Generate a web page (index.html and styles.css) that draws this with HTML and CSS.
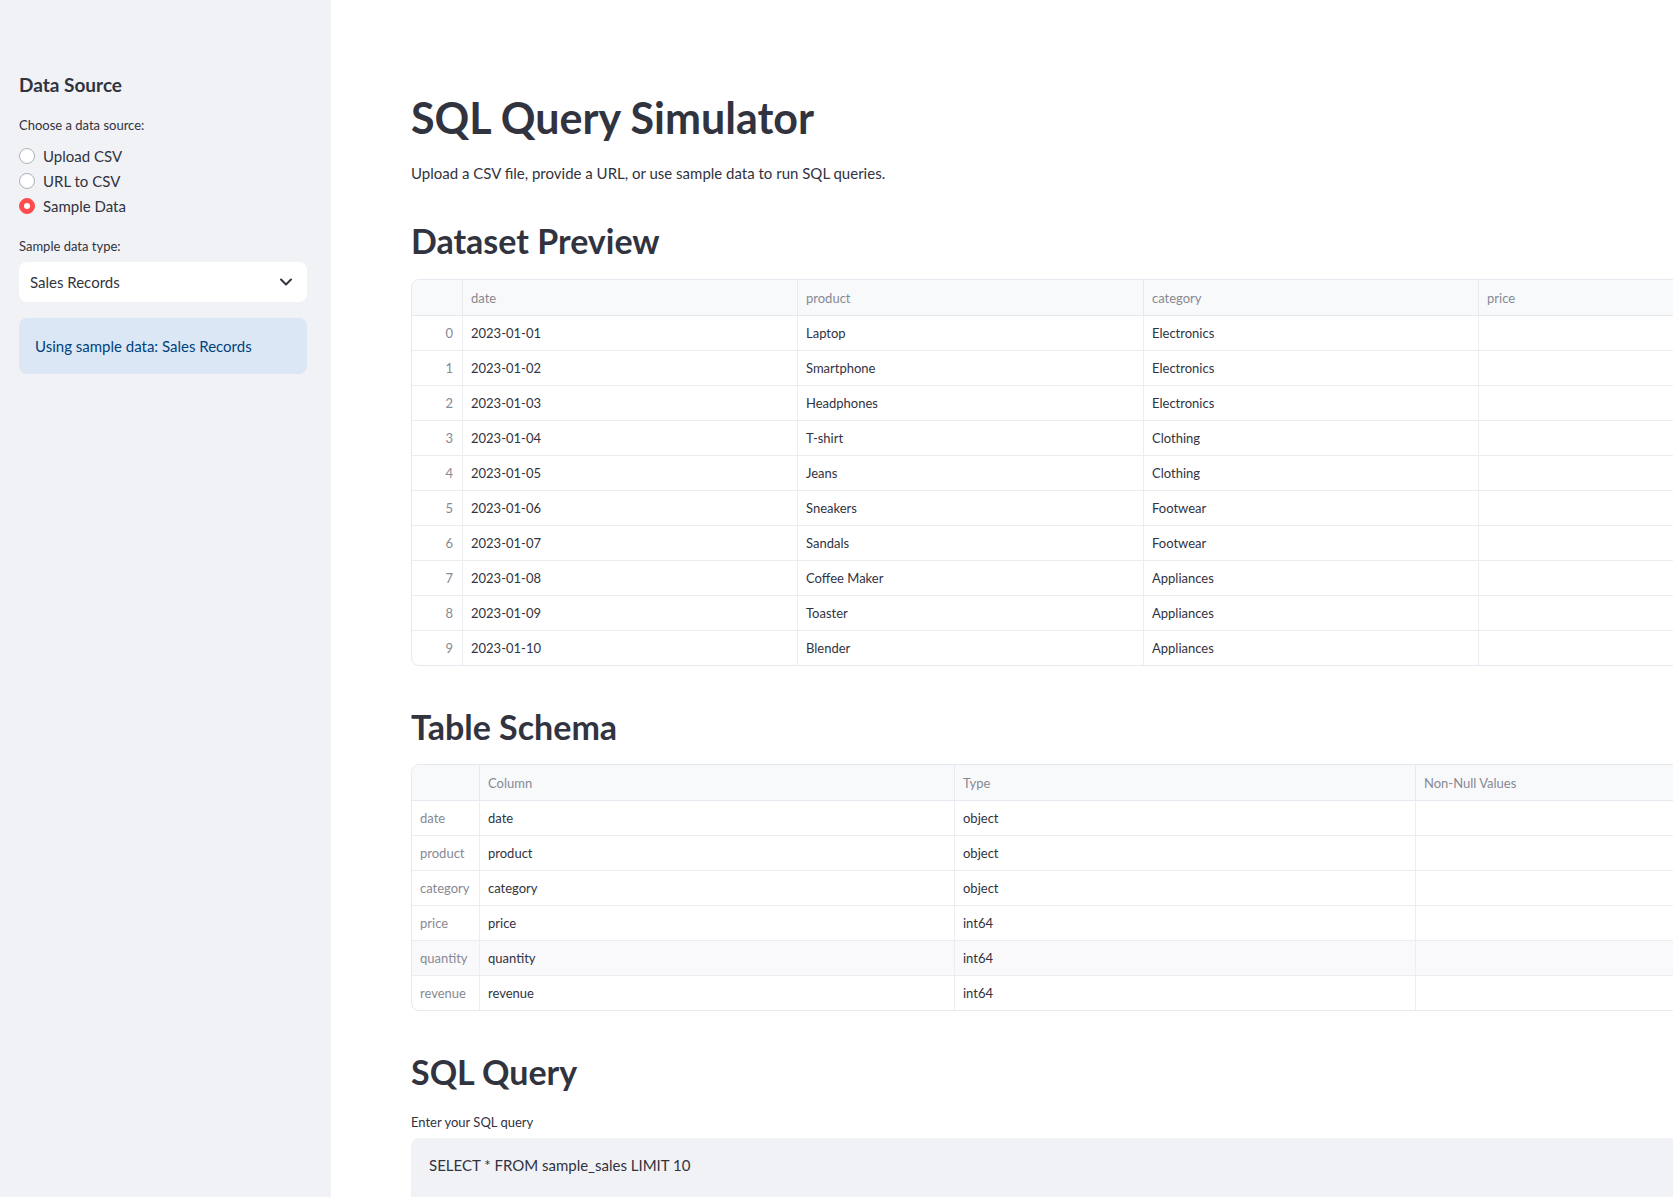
FILE: index.html
```html
<!DOCTYPE html>
<html lang="en">
<head>
<meta charset="utf-8">
<title>SQL Query Simulator</title>
<link rel="stylesheet" href="styles.css">
</head>
<body>
<div class="app">
  <aside class="sidebar">
    <h3 class="sb-title">Data Source</h3>
    <div class="sb-label">Choose a data source:</div>
    <div class="radios">
      <div class="radio"><span class="dot"></span><span>Upload CSV</span></div>
      <div class="radio"><span class="dot"></span><span>URL to CSV</span></div>
      <div class="radio"><span class="dot on"></span><span>Sample Data</span></div>
    </div>
    <div class="sb-label sb-label2">Sample data type:</div>
    <div class="select">
      <span>Sales Records</span>
      <svg class="chev" width="20" height="20" viewBox="0 0 24 24" fill="none" stroke="#31333f" stroke-width="2.4" stroke-linecap="round" stroke-linejoin="round"><path d="M6 9l6 6 6-6"/></svg>
    </div>
    <div class="info">Using sample data: Sales Records</div>
  </aside>
  <main class="main">
    <div class="content">
      <h1 class="title">SQL Query Simulator</h1>
      <p class="lead">Upload a CSV file, provide a URL, or use sample data to run SQL queries.</p>

      <h2 class="h2 h2-first">Dataset Preview</h2>
      <div class="grid grid-first">
        <table class="preview">
          <colgroup>
            <col class="c-idx"><col class="c-date"><col class="c-prod"><col class="c-cat"><col class="c-price"><col class="c-rest">
          </colgroup>
          <thead>
            <tr><th></th><th>date</th><th>product</th><th>category</th><th>price</th><th>quantity</th></tr>
          </thead>
          <tbody>
            <tr><td class="idx">0</td><td>2023-01-01</td><td>Laptop</td><td>Electronics</td><td></td><td></td></tr>
            <tr><td class="idx">1</td><td>2023-01-02</td><td>Smartphone</td><td>Electronics</td><td></td><td></td></tr>
            <tr><td class="idx">2</td><td>2023-01-03</td><td>Headphones</td><td>Electronics</td><td></td><td></td></tr>
            <tr><td class="idx">3</td><td>2023-01-04</td><td>T-shirt</td><td>Clothing</td><td></td><td></td></tr>
            <tr><td class="idx">4</td><td>2023-01-05</td><td>Jeans</td><td>Clothing</td><td></td><td></td></tr>
            <tr><td class="idx">5</td><td>2023-01-06</td><td>Sneakers</td><td>Footwear</td><td></td><td></td></tr>
            <tr><td class="idx">6</td><td>2023-01-07</td><td>Sandals</td><td>Footwear</td><td></td><td></td></tr>
            <tr><td class="idx">7</td><td>2023-01-08</td><td>Coffee Maker</td><td>Appliances</td><td></td><td></td></tr>
            <tr><td class="idx">8</td><td>2023-01-09</td><td>Toaster</td><td>Appliances</td><td></td><td></td></tr>
            <tr><td class="idx">9</td><td>2023-01-10</td><td>Blender</td><td>Appliances</td><td></td><td></td></tr>
          </tbody>
        </table>
      </div>

      <h2 class="h2 h2-schema">Table Schema</h2>
      <div class="grid grid-schema">
        <table class="schema">
          <colgroup>
            <col class="s-idx"><col class="s-col"><col class="s-type"><col class="s-nn">
          </colgroup>
          <thead>
            <tr><th></th><th>Column</th><th>Type</th><th>Non-Null Values</th></tr>
          </thead>
          <tbody>
            <tr><td class="idx left">date</td><td>date</td><td>object</td><td></td></tr>
            <tr><td class="idx left">product</td><td>product</td><td>object</td><td></td></tr>
            <tr><td class="idx left">category</td><td>category</td><td>object</td><td></td></tr>
            <tr><td class="idx left">price</td><td>price</td><td>int64</td><td></td></tr>
            <tr class="hover"><td class="idx left">quantity</td><td>quantity</td><td>int64</td><td></td></tr>
            <tr><td class="idx left">revenue</td><td>revenue</td><td>int64</td><td></td></tr>
          </tbody>
        </table>
      </div>

      <h2 class="h2 h2-query">SQL Query</h2>
      <div class="q-label">Enter your SQL query</div>
      <div class="textarea">SELECT * FROM sample_sales LIMIT 10</div>
    </div>
  </main>
</div>
</body>
</html>
```

FILE: styles.css
```css
* { box-sizing: border-box; }
html, body { margin: 0; padding: 0; }
body {
  font-family: "Source Sans Pro", Lato, "Noto Sans", sans-serif;
  color: #31333f;
  background: #ffffff;
  overflow: hidden;
}
.app {
  display: flex;
  width: 1673px;
  height: 1197px;
  overflow: hidden;
}

/* Sidebar */
.sidebar {
  flex: 0 0 331px;
  width: 331px;
  background: #f0f2f6;
  padding: 71px 24px 0 19px;
}
.sb-title {
  margin: 0;
  font-size: 19px;
  line-height: 28px;
  font-weight: 700;
  color: #31333f;
}
.sb-label {
  margin-top: 16px;
  font-size: 13px;
  line-height: 20px;
  color: #31333f;
}
.radios {
  margin-top: 8px;
  display: flex;
  flex-direction: column;
}
.radio {
  height: 25px;
  display: flex;
  align-items: center;
  gap: 8px;
  font-size: 15px;
  line-height: 24px;
}
.dot {
  width: 16px;
  height: 16px;
  border-radius: 50%;
  background: #ffffff;
  border: 1px solid #aeb1b8;
  flex: 0 0 16px;
  display: flex;
  align-items: center;
  justify-content: center;
}
.dot.on {
  background: #ff4b4b;
  border-color: #ff4b4b;
}
.dot.on::after {
  content: "";
  width: 6px;
  height: 6px;
  border-radius: 50%;
  background: #ffffff;
}
.sb-label2 { margin-top: 18px; }
.select {
  margin-top: 6px;
  height: 40px;
  background: #ffffff;
  border-radius: 8px;
  display: flex;
  align-items: center;
  justify-content: space-between;
  padding: 0 11px 0 11px;
  font-size: 15px;
}
.chev { display: block; }
.info {
  margin-top: 16px;
  height: 56px;
  border-radius: 8px;
  background: #dbe7f4;
  color: #004280;
  font-size: 15px;
  line-height: 24px;
  padding: 16px 16px;
}

/* Main */
.main {
  flex: 1 1 auto;
  min-width: 0;
  overflow: hidden;
}
.content {
  width: 1500px;
  padding: 92px 0 0 80px;
}
.title {
  margin: 0;
  font-size: 43px;
  line-height: 52px;
  font-weight: 700;
  color: #31333f;
}
.lead {
  margin: 17px 0 0;
  font-size: 15px;
  line-height: 24px;
}
.h2 {
  margin: 0;
  font-size: 34px;
  line-height: 44px;
  font-weight: 700;
  color: #31333f;
}
.h2-first { margin-top: 34px; }
.h2-schema { margin-top: 39px; }
.h2-query { margin-top: 39px; }

.grid {
  border: 1px solid #e6e9ef;
  border-radius: 8px;
  overflow: hidden;
  width: 1420px;
}
.grid-first { margin-top: 16px; }
.grid-schema { margin-top: 15px; }
.grid table {
  border-collapse: separate;
  border-spacing: 0;
  table-layout: fixed;
  width: 100%;
  font-size: 13px;
}
.grid th {
  height: 36px;
  background: #f8f9fb;
  color: #878993;
  font-weight: 400;
  text-align: left;
  padding: 0 8px;
  border-bottom: 1px solid #e6e9ef;
  border-right: 1px solid #e6e9ef;
}
.grid td {
  height: 35px;
  padding: 0 8px;
  border-bottom: 1px solid #ebedf0;
  border-right: 1px solid #ebedf0;
  color: #31333f;
  white-space: nowrap;
  overflow: hidden;
}
.grid tbody tr:last-child td { border-bottom: none; height: 34px; }
.grid td.idx {
  color: #878993;
  text-align: right;
  padding-right: 9px;
}
.grid td.idx.left { text-align: left; padding-left: 8px; }
.grid tr.hover td { background: #f9f9fb; }

.c-idx { width: 51px; }
.c-date { width: 335px; }
.c-prod { width: 346px; }
.c-cat { width: 335px; }
.c-price { width: 306px; }

.s-idx { width: 68px; }
.s-col { width: 475px; }
.s-type { width: 461px; }

.q-label {
  margin-top: 18px;
  font-size: 13px;
  line-height: 20px;
}
.textarea {
  margin-top: 6px;
  width: 1420px;
  height: 140px;
  background: #f0f2f6;
  border-radius: 8px;
  padding: 15px 18px;
  font-size: 15px;
  line-height: 24px;
}
```
